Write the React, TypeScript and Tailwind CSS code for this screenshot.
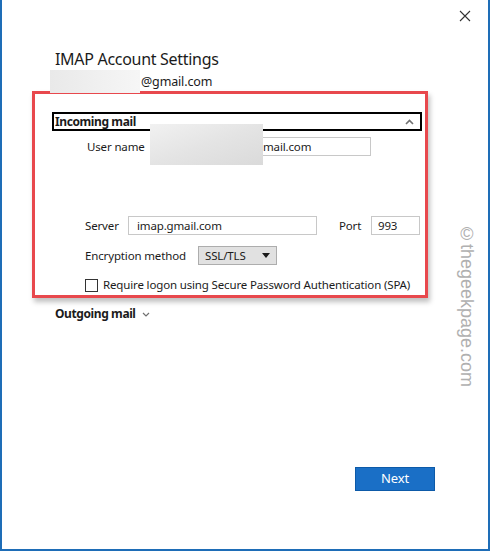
import React from 'react';

const App: React.FC = () => {
  return (
    <div className="relative flex h-[551px] w-[490px] flex-col border-x-2 border-b-2 border-[#1e6db7] bg-white font-['Noto_Sans',sans-serif] text-[11.5px] tracking-[-0.15px] text-[#1b1b1b]">
      {/* Close button */}
      <div className="flex justify-end pr-[17px] pt-[10px]">
        <svg width="12" height="12" viewBox="0 0 12 12" className="text-[#333]">
          <path d="M1 1L11 11M11 1L1 11" stroke="currentColor" strokeWidth="1.1" />
        </svg>
      </div>

      {/* Heading */}
      <div className="mt-[26px] pl-[53px] text-[16px] leading-[22px] tracking-[-0.3px]">IMAP Account Settings</div>
      <div className="relative mt-[3px] pl-[139px] text-[12.5px] leading-[18px]">
        @gmail.com
        <div className="absolute left-[48px] top-[-3px] h-[23px] w-[90px] bg-gradient-to-r from-[#e9e9e9] to-[#f6f6f6]" />
      </div>

      {/* Incoming mail (highlighted) */}
      <div className="ml-[30px] mt-0 w-[396px] border-[3px] border-[#e8484d] pb-[2px] pt-[18px] shadow-[2px_4px_5px_rgba(0,0,0,0.25)]">
        <div className="ml-[17px] flex h-[19px] w-[370px] items-center justify-between border-2 border-black pl-[1px] pr-[6px]">
          <span className="text-[12px] font-bold leading-none tracking-[-0.4px]">Incoming mail</span>
          <svg width="9" height="6" viewBox="0 0 9 6">
            <path d="M1 5L4.5 1.5L8 5" fill="none" stroke="#707070" strokeWidth="1.6" />
          </svg>
        </div>

        <div className="relative mt-[6px] flex h-[19px] items-center">
          <span className="ml-[52px] w-[63px]">User name</span>
          <div className="flex h-[19px] w-[221px] items-center border border-[#c8c8c8] pl-[112px]">mail.com</div>
          <div className="absolute left-[115px] top-[-13px] h-[41px] w-[113px] bg-gradient-to-br from-[#f1f1f1] via-[#e4e4e4] to-[#dadada]" />
        </div>

        <div className="mt-[60px] flex h-[19px] items-center">
          <span className="ml-[50px] w-[43px]">Server</span>
          <div className="flex h-[19px] w-[189px] items-center border border-[#c8c8c8] pl-[8px]">imap.gmail.com</div>
          <span className="ml-[22px] w-[32px]">Port</span>
          <div className="flex h-[19px] w-[49px] items-center border border-[#c8c8c8] pl-[6px]">993</div>
        </div>

        <div className="mt-[11px] flex h-[19px] items-center">
          <span className="ml-[50px] w-[113px]">Encryption method</span>
          <div className="flex h-[19px] w-[79px] items-center justify-between border border-[#adadad] bg-[#e1e1e1] pl-[6px] pr-[6px]">
            <span>SSL/TLS</span>
            <svg width="8" height="5" viewBox="0 0 8 5">
              <path d="M0 0H8L4 5Z" fill="#1b1b1b" />
            </svg>
          </div>
        </div>

        <div className="mt-[12px] flex h-[16px] items-center">
          <div className="ml-[50px] h-[13px] w-[13px] border border-[#333]" />
          <span className="ml-[5px] whitespace-nowrap">Require logon using Secure Password Authentication (SPA)</span>
        </div>
      </div>

      {/* Outgoing mail */}
      <div className="mt-[7px] flex items-center pl-[53px]">
        <span className="text-[12px] font-bold tracking-[-0.4px]">Outgoing mail</span>
        <svg width="8" height="5" viewBox="0 0 8 5" className="ml-[6px]">
          <path d="M1 1L4 4L7 1" fill="none" stroke="#707070" strokeWidth="1.2" />
        </svg>
      </div>

      <div className="flex-1" />

      <div className="mb-[58px] mr-[53px] flex justify-end">
        <button className="h-[24px] w-[80px] border border-[#0d5aa8] bg-[#1a6fc6] text-[13px] text-white">Next</button>
      </div>

      {/* Watermark */}
      <div className="absolute left-[451px] top-[224px] font-['Liberation_Sans',sans-serif] text-[18px] tracking-normal text-[#b0b0b0] [writing-mode:vertical-rl]">
        ©thegeekpage.com
      </div>
    </div>
  );
};

export default App;
